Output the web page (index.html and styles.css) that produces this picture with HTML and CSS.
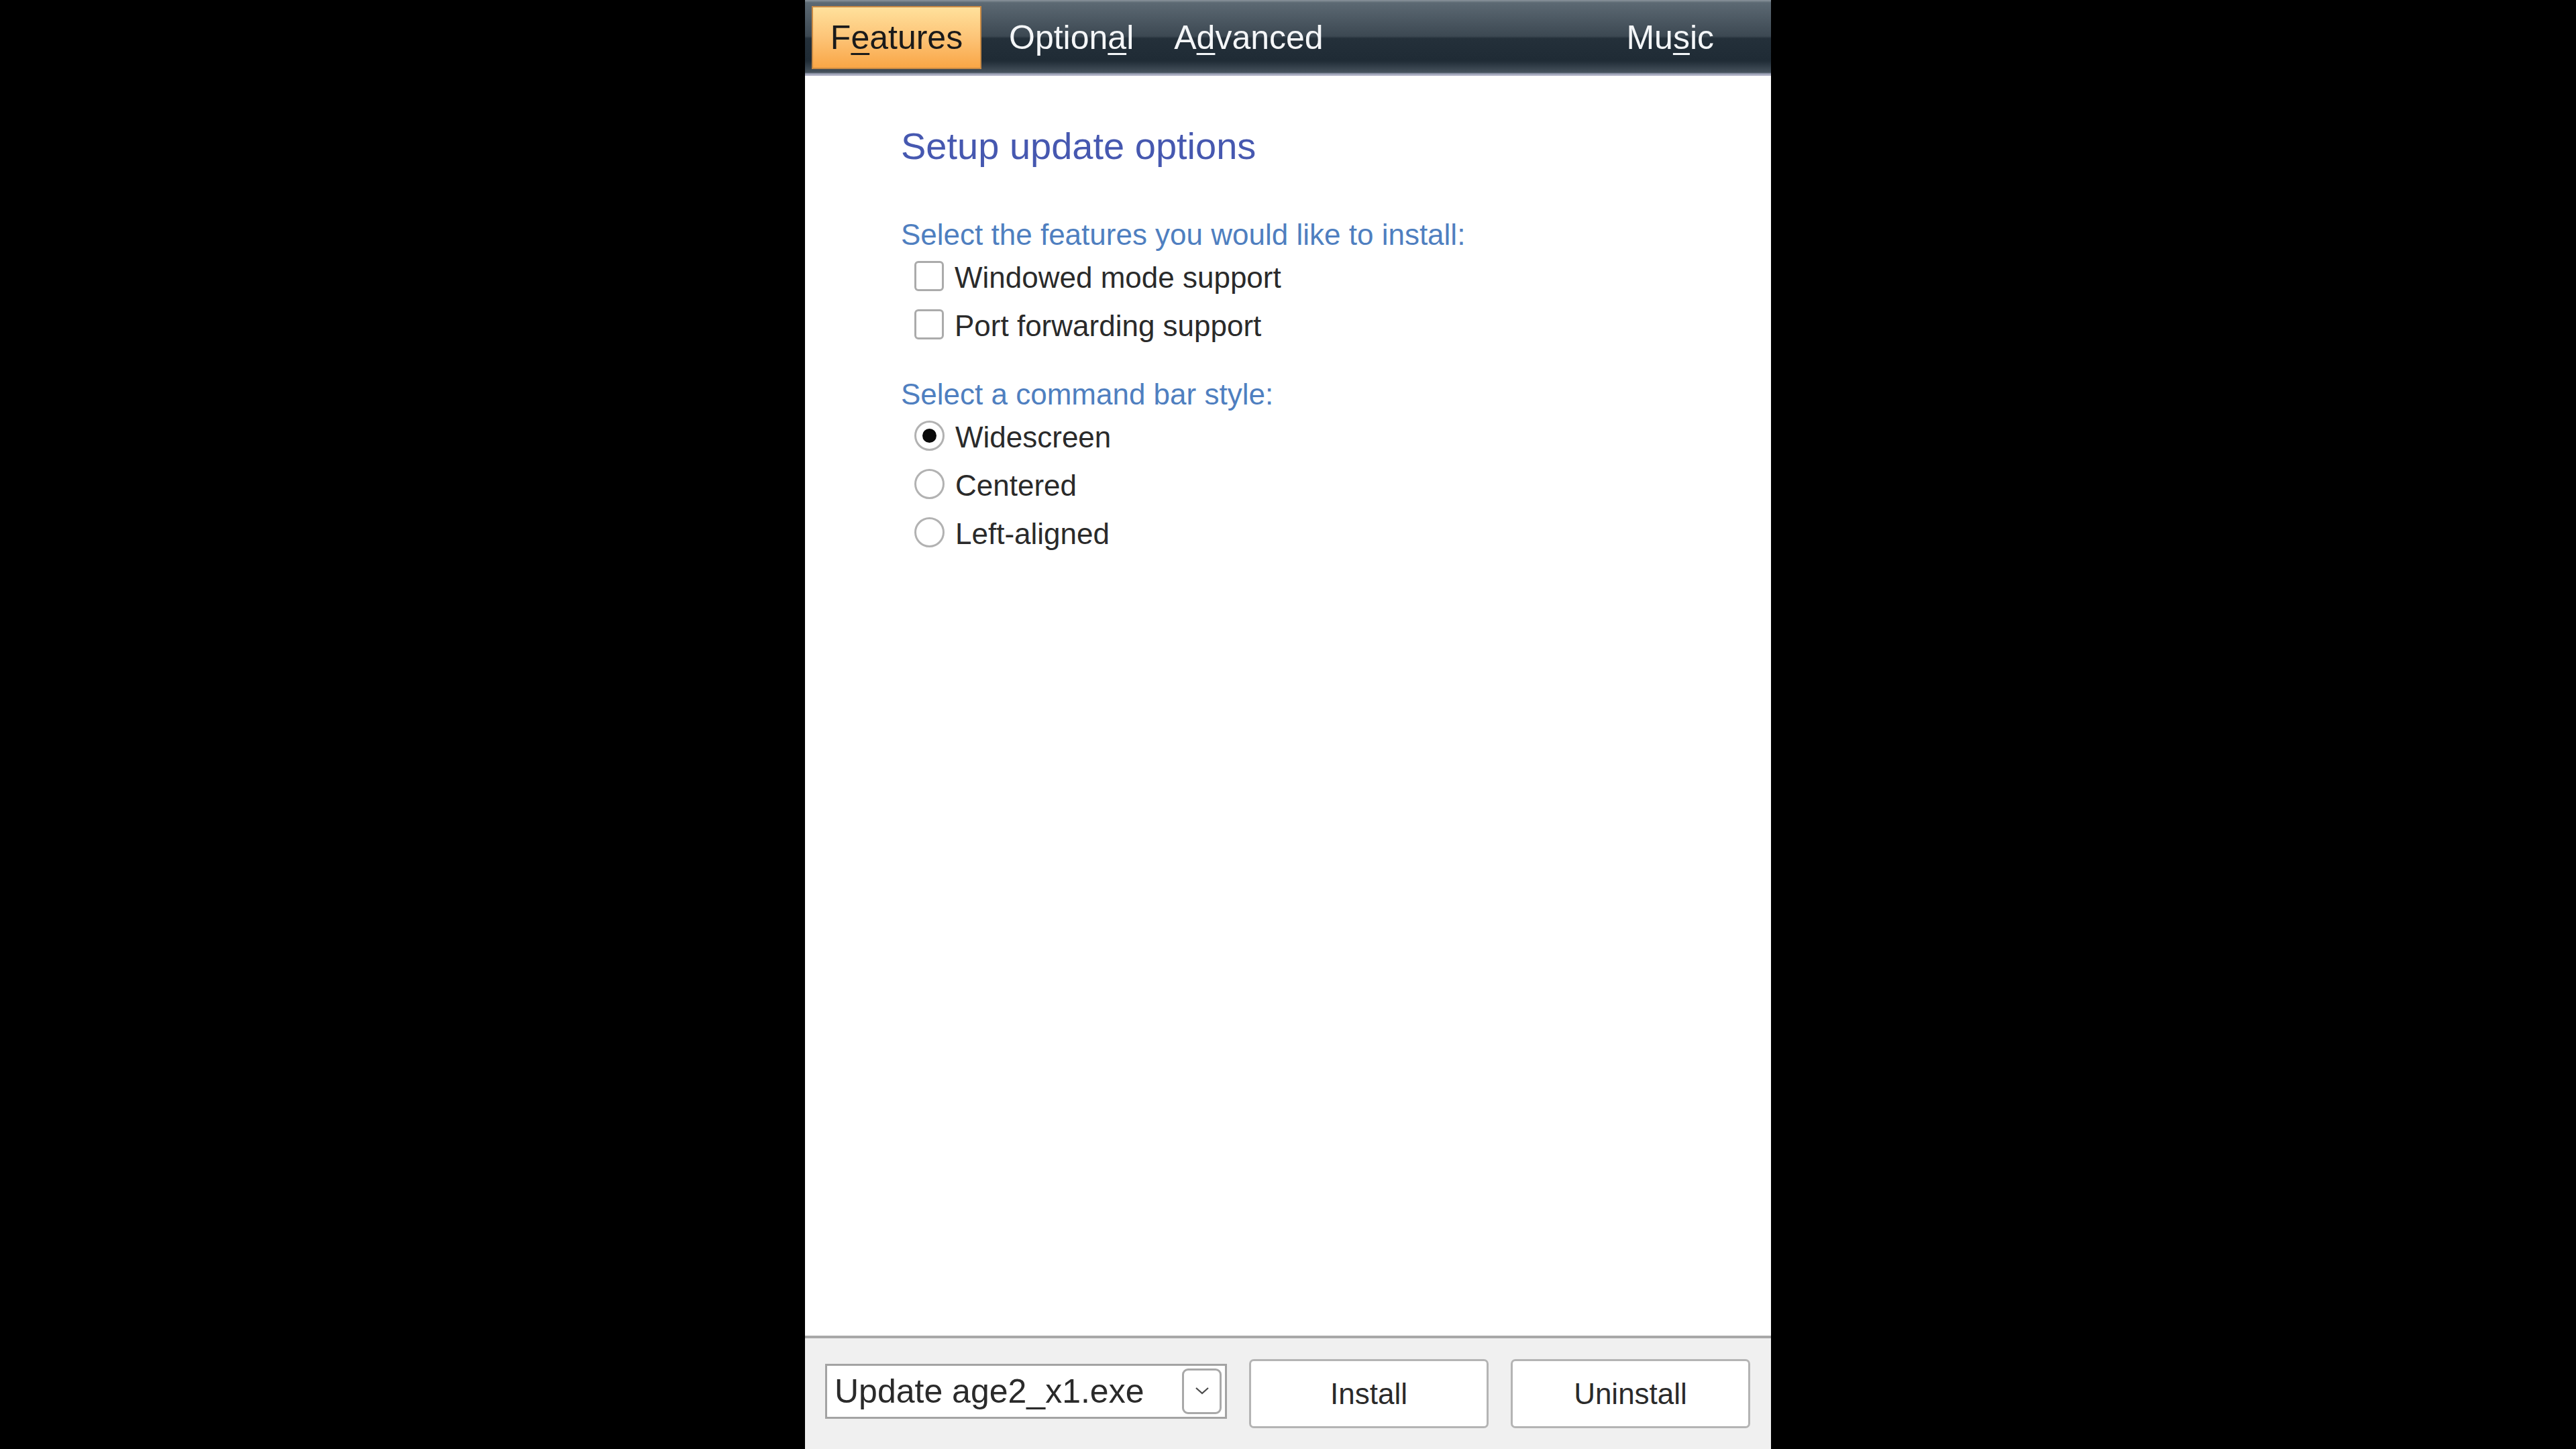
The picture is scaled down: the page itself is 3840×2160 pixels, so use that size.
FILE: index.html
```html
<!DOCTYPE html>
<html>
<head>
<meta charset="utf-8">
<title>Setup update options</title>
<link rel="stylesheet" href="styles.css">
</head>
<body>
<div class="window">
  <div class="tabbar">
    <div class="tab active">F<u>e</u>atures</div>
    <div class="tab">Option<u>a</u>l</div>
    <div class="tab">A<u>d</u>vanced</div>
    <div class="tab music">Mu<u>s</u>ic</div>
  </div>
  <div class="content">
    <div class="title">Setup update options</div>
    <div class="subhead first">Select the features you would like to install:</div>
    <div class="option"><span class="check"></span><span class="label">Windowed mode support</span></div>
    <div class="option"><span class="check"></span><span class="label">Port forwarding support</span></div>
    <div class="subhead second">Select a command bar style:</div>
    <div class="option"><span class="radio checked"></span><span class="label">Widescreen</span></div>
    <div class="option"><span class="radio"></span><span class="label">Centered</span></div>
    <div class="option"><span class="radio"></span><span class="label">Left-aligned</span></div>
  </div>
  <div class="footer">
    <div class="dropdown">
      <span class="dd-text">Update age2_x1.exe</span>
      <span class="dd-btn"><svg width="22" height="13" viewBox="0 0 22 13"><polyline points="2,2 11,10 20,2" fill="none" stroke="#4a4a4a" stroke-width="2.2"/></svg></span>
    </div>
    <div class="button">Install</div>
    <div class="button">Uninstall</div>
  </div>
</div>
</body>
</html>
```
FILE: styles.css
```css
html, body {
  margin: 0;
  padding: 0;
  background: #000;
  height: 2160px;
  overflow: hidden;
}
body {
  font-family: "Liberation Sans", Arial, sans-serif;
}
.window {
  width: 1440px;
  height: 2160px;
  margin: 0 auto;
  background: #fff;
  display: flex;
  flex-direction: column;
}
.tabbar {
  height: 113px;
  box-sizing: border-box;
  padding: 9px 62px 0 10px;
  display: flex;
  align-items: flex-start;
  gap: 14px;
  background: linear-gradient(to bottom,
    #8b959d 0px, #5c6973 4px, #3c4852 54px, #24303a 57px,
    #1f2b35 90px, #27333d 94px, #46525d 108px, #9ea3b8 110px, #b4b6c8 113px);
}
.tab {
  height: 94px;
  line-height: 94px;
  padding: 0 23px;
  font-size: 50px;
  color: #f4f6f8;
  box-sizing: border-box;
  white-space: nowrap;
}
.tab u {
  text-decoration-thickness: 3px;
  text-underline-offset: 6px;
}
.tab.active {
  width: 253px;
  color: #1a1a1a;
  text-align: center;
  padding: 0;
  border: 2px solid #c98a44;
  line-height: 90px;
  background: linear-gradient(to bottom, #ffe19c 0%, #fdc477 50%, #f9a646 100%);
  margin-right: 4px;
}
.tab.music {
  margin-left: auto;
}
.content {
  flex: 1;
  padding: 70px 0 0 143px;
}
.title {
  font-size: 56px;
  line-height: 70px;
  color: #4658b0;
}
.subhead {
  font-size: 44px;
  line-height: 50px;
  color: #4f7fc0;
}
.subhead.first {
  margin-top: 72px;
}
.subhead.second {
  margin-top: 44px;
}
.option {
  height: 72px;
  display: flex;
  align-items: center;
  padding-left: 20px;
  font-size: 44px;
  color: #2a2a2a;
}
.check {
  width: 44px;
  height: 45px;
  box-sizing: border-box;
  border: 3px solid #ababab;
  border-radius: 6px;
  background: #fff;
  flex: none;
}
.radio {
  width: 45px;
  height: 45px;
  box-sizing: border-box;
  border: 3px solid #b2b2b2;
  border-radius: 50%;
  background: #fff;
  flex: none;
  display: flex;
  align-items: center;
  justify-content: center;
}
.radio.checked::after {
  content: "";
  width: 21px;
  height: 21px;
  border-radius: 50%;
  background: #0a0a0a;
}
.label {
  margin-left: 16px;
  position: relative;
  top: 3px;
}
.footer {
  height: 169px;
  box-sizing: border-box;
  border-top: 4px solid #a8a8a8;
  background: #f0f0f0;
  display: flex;
  align-items: center;
  padding: 0 31px 0 30px;
  gap: 33px;
}
.dropdown {
  width: 599px;
  height: 82px;
  box-sizing: border-box;
  border: 3px solid #a3a3a3;
  background: #fff;
  display: flex;
  align-items: center;
  justify-content: space-between;
  padding: 0 5px 0 11px;
  margin-bottom: 8px;
}
.dd-text {
  font-size: 50px;
  color: #2a2a2a;
}
.dd-btn {
  width: 59px;
  height: 68px;
  box-sizing: border-box;
  border: 3px solid #a8a8a8;
  border-radius: 9px;
  background: #fff;
  display: flex;
  align-items: center;
  justify-content: center;
}
.button {
  width: 357px;
  height: 103px;
  box-sizing: border-box;
  border: 3px solid #b4b4b4;
  border-radius: 7px;
  background: #fff;
  display: flex;
  align-items: center;
  justify-content: center;
  font-size: 44px;
  color: #2a2a2a;
}
```
